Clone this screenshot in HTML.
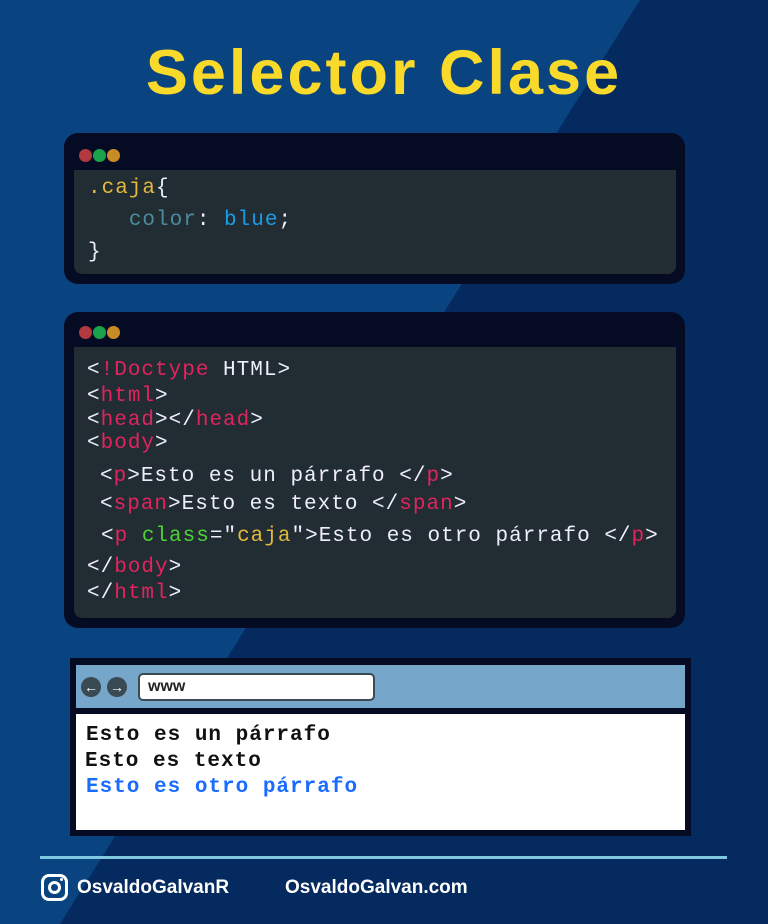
<!DOCTYPE html>
<html><head><style>
*{margin:0;padding:0;box-sizing:border-box}
body{width:768px;height:924px;overflow:hidden;position:relative;background:#042a5f;font-family:"Liberation Sans",sans-serif}
.bg{position:absolute;inset:0;background:#0a4480;clip-path:polygon(0 0,640px 0,60px 924px,0 924px)}
h1{position:absolute;top:37px;left:0;width:768px;text-align:center;color:#f9d92a;font-size:63px;font-weight:bold;letter-spacing:3px}
.card{position:absolute;left:64px;width:621px;background:#050b22;border-radius:14px}
.dot{position:absolute;width:13px;height:13px;border-radius:50%}
.panel{position:absolute;left:10px;right:9px;background:#222c33;border-radius:0 0 8px 8px}
.code{position:absolute;font-family:"Liberation Mono",monospace;font-size:21px;letter-spacing:1px;color:#eef;white-space:pre;line-height:1}
.r{color:#e0245e}.y{color:#e2b93b}.g{color:#4cd137}.c{color:#4b8ca0}.b{color:#1a9ce8}
.foot{position:absolute;color:#fff;font-weight:bold;font-size:19px;top:877px}
</style></head><body>
<div class="bg"></div>
<h1>Selector Clase</h1>

<div class="card" style="top:133px;height:151px">
 <div class="dot" style="left:15px;top:16px;background:#b03a3e"></div>
 <div class="dot" style="left:29px;top:16px;background:#1aa34a"></div>
 <div class="dot" style="left:43px;top:16px;background:#c98b25"></div>
 <div class="panel" style="top:37px;height:104px"></div>
</div>
<div class="code" style="left:88px;top:178px"><span class="y">.caja</span>{</div>
<div class="code" style="left:88px;top:210px">   <span class="c">color</span>: <span class="b">blue</span>;</div>
<div class="code" style="left:88px;top:242px">}</div>

<div class="card" style="top:312px;height:316px">
 <div class="dot" style="left:15px;top:14px;background:#b03a3e"></div>
 <div class="dot" style="left:29px;top:14px;background:#1aa34a"></div>
 <div class="dot" style="left:43px;top:14px;background:#c98b25"></div>
 <div class="panel" style="top:35px;height:271px"></div>
</div>
<div class="code" style="left:87px;top:360px">&lt;<span class="r">!Doctype</span> HTML&gt;</div>
<div class="code" style="left:87px;top:386px">&lt;<span class="r">html</span>&gt;</div>
<div class="code" style="left:87px;top:410px">&lt;<span class="r">head</span>&gt;&lt;/<span class="r">head</span>&gt;</div>
<div class="code" style="left:87px;top:433px">&lt;<span class="r">body</span>&gt;</div>
<div class="code" style="left:100px;top:466px">&lt;<span class="r">p</span>&gt;Esto es un párrafo &lt;/<span class="r">p</span>&gt;</div>
<div class="code" style="left:100px;top:494px">&lt;<span class="r">span</span>&gt;Esto es texto &lt;/<span class="r">span</span>&gt;</div>
<div class="code" style="left:101px;top:526px">&lt;<span class="r">p</span> <span class="g">class</span>="<span class="y">caja</span>"&gt;Esto es otro párrafo &lt;/<span class="r">p</span>&gt;</div>
<div class="code" style="left:87px;top:557px">&lt;/<span class="r">body</span>&gt;</div>
<div class="code" style="left:87px;top:583px">&lt;/<span class="r">html</span>&gt;</div>

<div style="position:absolute;left:70px;top:658px;width:621px;height:178px;background:#050b22"></div>
<div style="position:absolute;left:76px;top:665px;width:609px;height:43px;background:#76a6c9"></div>
<div style="position:absolute;left:81px;top:677px;width:20px;height:20px;border-radius:50%;background:#3a4a52;color:#fff;font-size:14px;font-weight:bold;text-align:center;line-height:20px">←</div>
<div style="position:absolute;left:107px;top:677px;width:20px;height:20px;border-radius:50%;background:#3a4a52;color:#fff;font-size:14px;font-weight:bold;text-align:center;line-height:20px">→</div>
<div style="position:absolute;left:138px;top:673px;width:237px;height:28px;background:#fff;border:2px solid #3a4a52;border-radius:5px;font-weight:bold;font-size:16px;color:#222;padding-left:8px;line-height:24px">www</div>
<div style="position:absolute;left:76px;top:714px;width:609px;height:116px;background:#fff"></div>
<div class="code" style="left:86px;top:725px;font-weight:bold;color:#111">Esto es un párrafo</div>
<div class="code" style="left:85px;top:751px;font-weight:bold;color:#111">Esto es texto</div>
<div class="code" style="left:86px;top:777px;font-weight:bold;color:#1a6cff">Esto es otro párrafo</div>

<div style="position:absolute;left:40px;top:856px;width:687px;height:3px;background:#7ec8e0"></div>
<div style="position:absolute;left:41px;top:874px;width:27px;height:27px;border:3px solid #fff;border-radius:8px"></div>
<div style="position:absolute;left:48px;top:881px;width:13px;height:13px;border:3px solid #fff;border-radius:50%"></div>
<div style="position:absolute;left:60px;top:878px;width:3px;height:3px;background:#fff;border-radius:50%"></div>
<div class="foot" style="left:77px">OsvaldoGalvanR</div>
<div class="foot" style="left:285px">OsvaldoGalvan.com</div>
</body></html>
